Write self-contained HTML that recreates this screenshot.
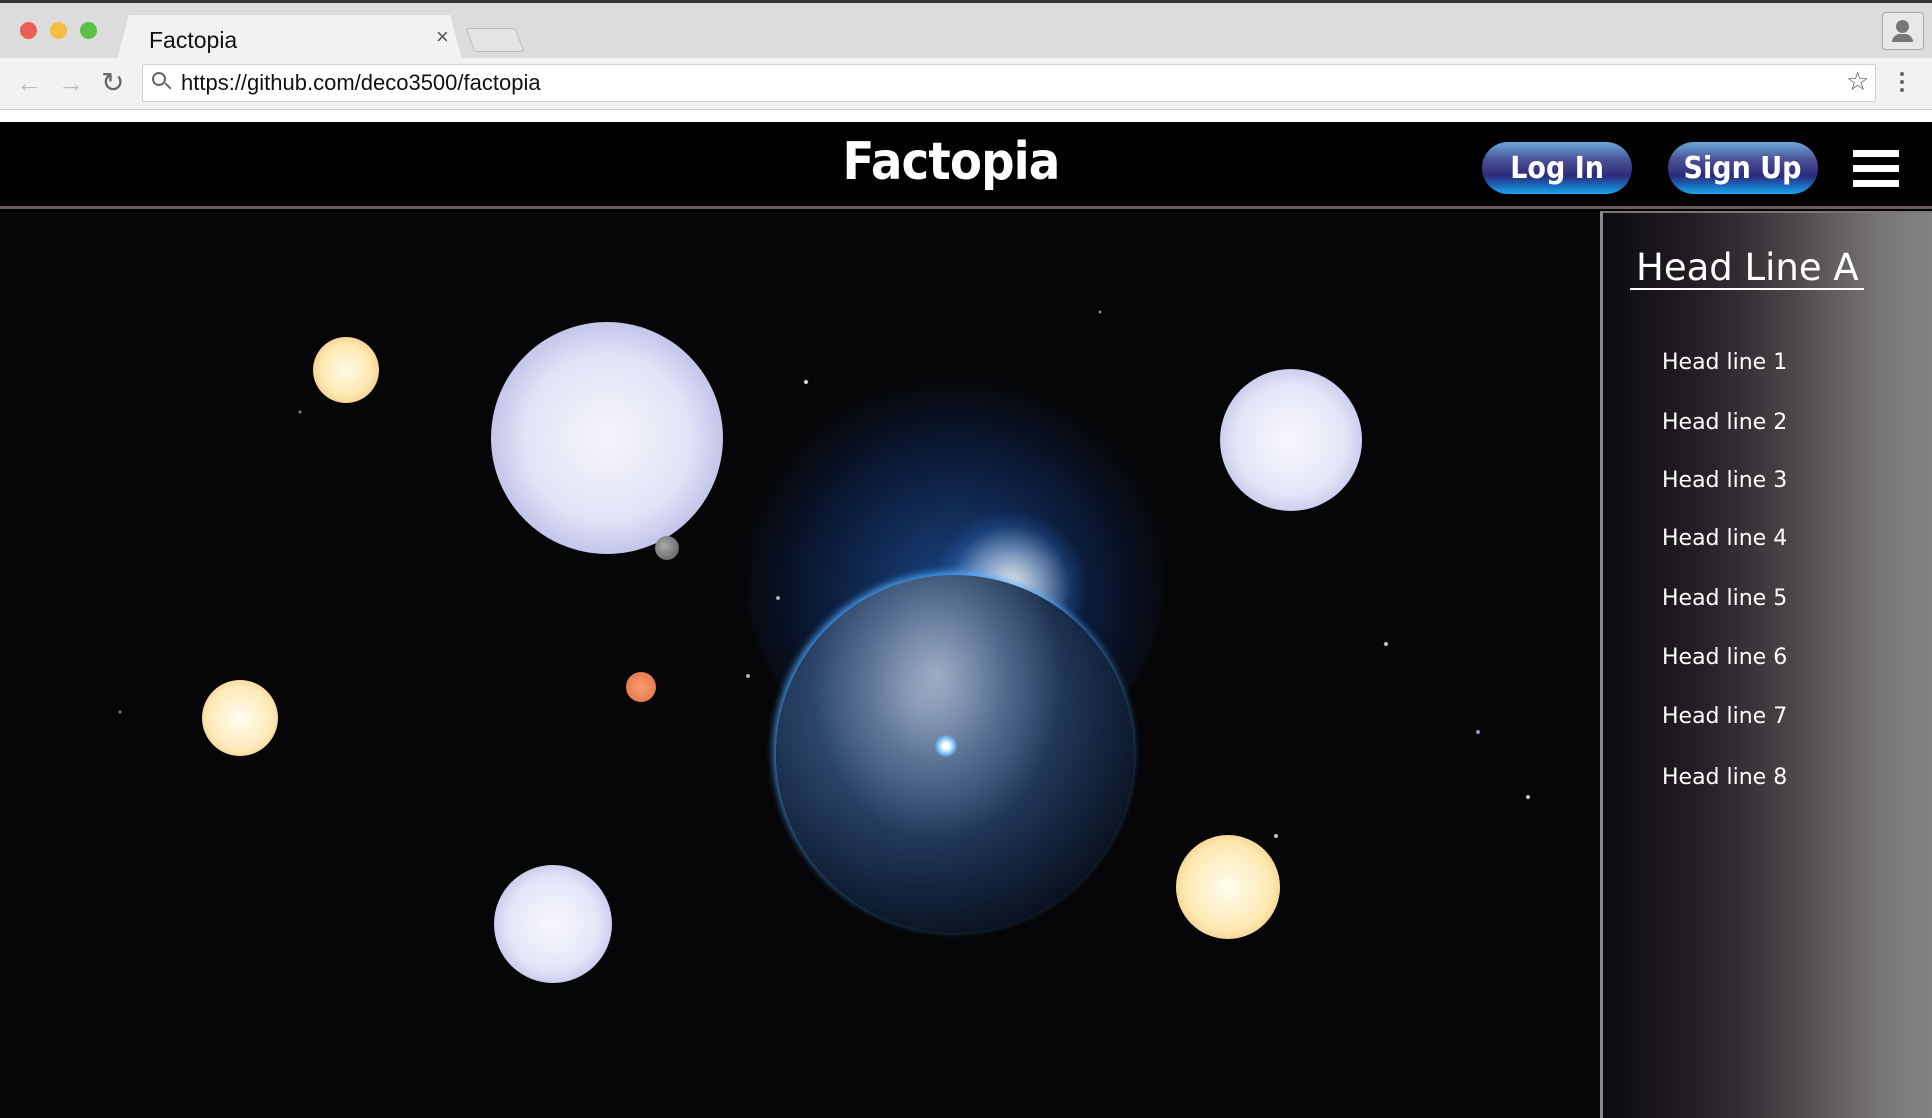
<!DOCTYPE html>
<html><head><meta charset="utf-8"><style>
*{margin:0;padding:0;box-sizing:border-box}
body{width:1932px;height:1118px;overflow:hidden;background:#000;font-family:"Liberation Sans",sans-serif;position:relative}
.abs{position:absolute}
#tabbar{left:0;top:0;width:1932px;height:58px;background:#dcdcdc;border-top:3px solid #333}
#tab{left:117px;top:15px;width:345px;height:44px;background:#f2f2f2;clip-path:polygon(12px 0,333px 0,345px 44px,0 44px);}
#tab2{left:470px;top:28px;width:50px;height:24px;background:#e4e4e4;border:1px solid #bbb;border-radius:3px;transform:skewX(20deg)}
.dot{width:17px;height:17px;border-radius:50%;top:22px}
#addr{left:0;top:58px;width:1932px;height:52px;background:#f2f2f2;border-bottom:1px solid #ccc}
#url{left:142px;top:64px;width:1734px;height:38px;background:#fff;border:1px solid #d0d0d0;border-radius:2px}
#strip{left:0;top:110px;width:1932px;height:12px;background:#fff}
#header{left:0;top:122px;width:1932px;height:87px;background:#000;border-bottom:3px solid #6b5a60}
#title{left:0;width:1902px;top:132px;text-align:center;color:#fff;font:bold 52px "DejaVu Sans",sans-serif;letter-spacing:-1px;transform:scaleX(0.9)}
.btn{top:142px;width:150px;height:52px;border-radius:26px;color:#fff;font:bold 30px "DejaVu Sans",sans-serif;text-align:center;line-height:54px;background:linear-gradient(#6aa8d8 0%,#4a4f94 35%,#2b2a7a 65%,#1a6fc0 85%,#18a8e8 100%);}
.btn span{display:inline-block;transform:scaleX(0.9)}
.hb{left:1853px;width:46px;height:7px;background:#fff}
#space{left:0;top:212px;width:1600px;height:906px;background:#050507;overflow:hidden}
#side{left:1600px;top:211px;width:332px;height:907px;border-left:3px solid #8a8a8a;border-top:2px solid #777;background:linear-gradient(90deg,#0c0b10 0%,#1e191f 22%,#322b31 40%,#4a4348 56%,#625d60 70%,#787576 84%,#838383 100%)}
.sph{border-radius:50%}
.item{left:1662px;color:#fff;font:22px "DejaVu Sans","Liberation Sans",sans-serif}
</style></head><body>
<div class="abs" id="tabbar"></div>
<div class="abs dot" style="left:20px;background:#ec5f57"></div>
<div class="abs dot" style="left:50px;background:#f4bd3f"></div>
<div class="abs dot" style="left:80px;background:#5bc043"></div>
<div class="abs" id="tab"></div>
<div class="abs" style="left:149px;top:27px;font-size:23px;color:#111">Factopia</div>
<div class="abs" style="left:436px;top:24px;font-size:22px;color:#555">×</div>
<div class="abs" id="tab2"></div>
<div class="abs" style="left:1882px;top:12px;width:42px;height:38px;border:1px solid #aaa;border-radius:4px;background:#e8e8e8"></div>
<div class="abs" style="left:1896px;top:20px;width:13px;height:13px;border-radius:50%;background:#777"></div>
<div class="abs" style="left:1892px;top:34px;width:21px;height:8px;border-radius:8px 8px 0 0;background:#777"></div>
<div class="abs" id="addr"></div>
<div class="abs" style="left:16px;top:68px;font-size:26px;color:#bbb">←</div>
<div class="abs" style="left:58px;top:68px;font-size:26px;color:#bbb">→</div>
<div class="abs" style="left:101px;top:66px;font-size:28px;color:#666">↻</div>
<div class="abs" id="url"></div>
<div class="abs" style="left:152px;top:72px;width:14px;height:14px;border:2px solid #666;border-radius:50%"></div>
<div class="abs" style="left:164px;top:85px;width:8px;height:2px;background:#666;transform:rotate(45deg)"></div>
<div class="abs" style="left:181px;top:70px;font-size:22px;color:#111">https://github.com/deco3500/factopia</div>
<div class="abs" style="left:1846px;top:66px;font-size:26px;color:#555">☆</div>
<div class="abs" style="left:1900px;top:72px;width:4px;height:4px;background:#666;border-radius:50%;box-shadow:0 8px 0 #666,0 16px 0 #666"></div>
<div class="abs" id="strip"></div>
<div class="abs" id="header"></div>
<div class="abs" id="title">Factopia</div>
<div class="abs btn" style="left:1482px"><span>Log In</span></div>
<div class="abs btn" style="left:1668px"><span>Sign Up</span></div>
<div class="abs hb" style="top:150px"></div>
<div class="abs hb" style="top:165px"></div>
<div class="abs hb" style="top:180px"></div>
<div class="abs" id="space">
 <div class="abs" style="left:0;top:0;width:1600px;height:906px;background:
 radial-gradient(circle at 806px 170px,rgba(255,255,255,.9) 1.5px,transparent 2.5px),
 radial-gradient(circle at 1386px 432px,rgba(255,255,255,.8) 1.5px,transparent 2.5px),
 radial-gradient(circle at 1478px 520px,rgba(180,200,255,.8) 1.5px,transparent 2.5px),
 radial-gradient(circle at 1528px 585px,rgba(255,255,255,.8) 1.5px,transparent 2.5px),
 radial-gradient(circle at 778px 386px,rgba(255,255,255,.8) 1.5px,transparent 2.5px),
 radial-gradient(circle at 748px 464px,rgba(255,255,255,.7) 1.5px,transparent 2.5px),
 radial-gradient(circle at 1276px 624px,rgba(255,255,255,.8) 1.5px,transparent 2.5px),
 radial-gradient(circle at 300px 200px,rgba(255,255,255,.5) 1px,transparent 2px),
 radial-gradient(circle at 120px 500px,rgba(255,255,255,.5) 1px,transparent 2px),
 radial-gradient(circle at 1100px 100px,rgba(255,255,255,.5) 1px,transparent 2px),
 #060608"></div>
 <div class="abs sph" style="left:745px;top:150px;width:420px;height:420px;background:radial-gradient(circle at 50% 55%,rgba(40,120,230,.55) 0%,rgba(20,70,160,.3) 45%,transparent 70%)"></div>
 <div class="abs sph" style="left:930px;top:300px;width:160px;height:150px;background:radial-gradient(circle,rgba(255,250,240,.95) 0%,rgba(190,220,255,.6) 30%,rgba(60,140,240,.2) 55%,transparent 70%)"></div>
 <div class="abs sph" style="left:776px;top:363px;width:358px;height:358px;background:
 radial-gradient(ellipse at 45% 28%,rgba(220,230,245,.55) 0%,rgba(150,170,200,.3) 25%,transparent 45%),
 radial-gradient(circle at 40% 35%,#5c7394 0%,#2f4a70 30%,#172a46 55%,#0a1322 75%,#04060c 100%);box-shadow:-2px -3px 8px rgba(80,170,255,.9)"></div>
 <div class="abs sph" style="left:935px;top:523px;width:22px;height:22px;background:radial-gradient(circle,#fff 20%,#7cc8ff 50%,transparent 75%)"></div>
 <div class="abs sph" style="left:491px;top:110px;width:232px;height:232px;background:radial-gradient(circle at 50% 50%,#f4f4fb 0%,#e2e4f6 50%,#a6a8e0 90%,#8f92d4 100%)"></div>
 <div class="abs sph" style="left:1220px;top:157px;width:142px;height:142px;background:radial-gradient(circle,#f8f8fd 0%,#e3e5f7 55%,#9fa3de 100%)"></div>
 <div class="abs sph" style="left:494px;top:653px;width:118px;height:118px;background:radial-gradient(circle,#f8f8fd 0%,#e3e5f7 55%,#9fa3de 100%)"></div>
 <div class="abs sph" style="left:313px;top:125px;width:66px;height:66px;background:radial-gradient(circle,#fffbe8 0%,#fde8b0 55%,#e8b060 100%)"></div>
 <div class="abs sph" style="left:202px;top:468px;width:76px;height:76px;background:radial-gradient(circle,#fffdf0 0%,#fdeab8 60%,#e7b060 100%)"></div>
 <div class="abs sph" style="left:1176px;top:623px;width:104px;height:104px;background:radial-gradient(circle,#fffdf0 0%,#fde8b0 60%,#e8a858 100%)"></div>
 <div class="abs sph" style="left:626px;top:460px;width:30px;height:30px;background:radial-gradient(circle,#f8a070 0%,#e06a40 100%)"></div>
 <div class="abs sph" style="left:655px;top:324px;width:24px;height:24px;background:radial-gradient(circle at 40% 40%,#aaa,#555)"></div>
</div>
<div class="abs" id="side"></div>
<div class="abs" style="left:1636px;top:246px;color:#fff;font:37px 'DejaVu Sans','Liberation Sans',sans-serif">Head Line A</div>
<div class="abs" style="left:1630px;top:288px;width:234px;height:2px;background:#fff"></div>
<div class="abs item" style="top:350px">Head line 1</div>
<div class="abs item" style="top:410px">Head line 2</div>
<div class="abs item" style="top:468px">Head line 3</div>
<div class="abs item" style="top:526px">Head line 4</div>
<div class="abs item" style="top:586px">Head line 5</div>
<div class="abs item" style="top:645px">Head line 6</div>
<div class="abs item" style="top:704px">Head line 7</div>
<div class="abs item" style="top:765px">Head line 8</div>
</body></html>
